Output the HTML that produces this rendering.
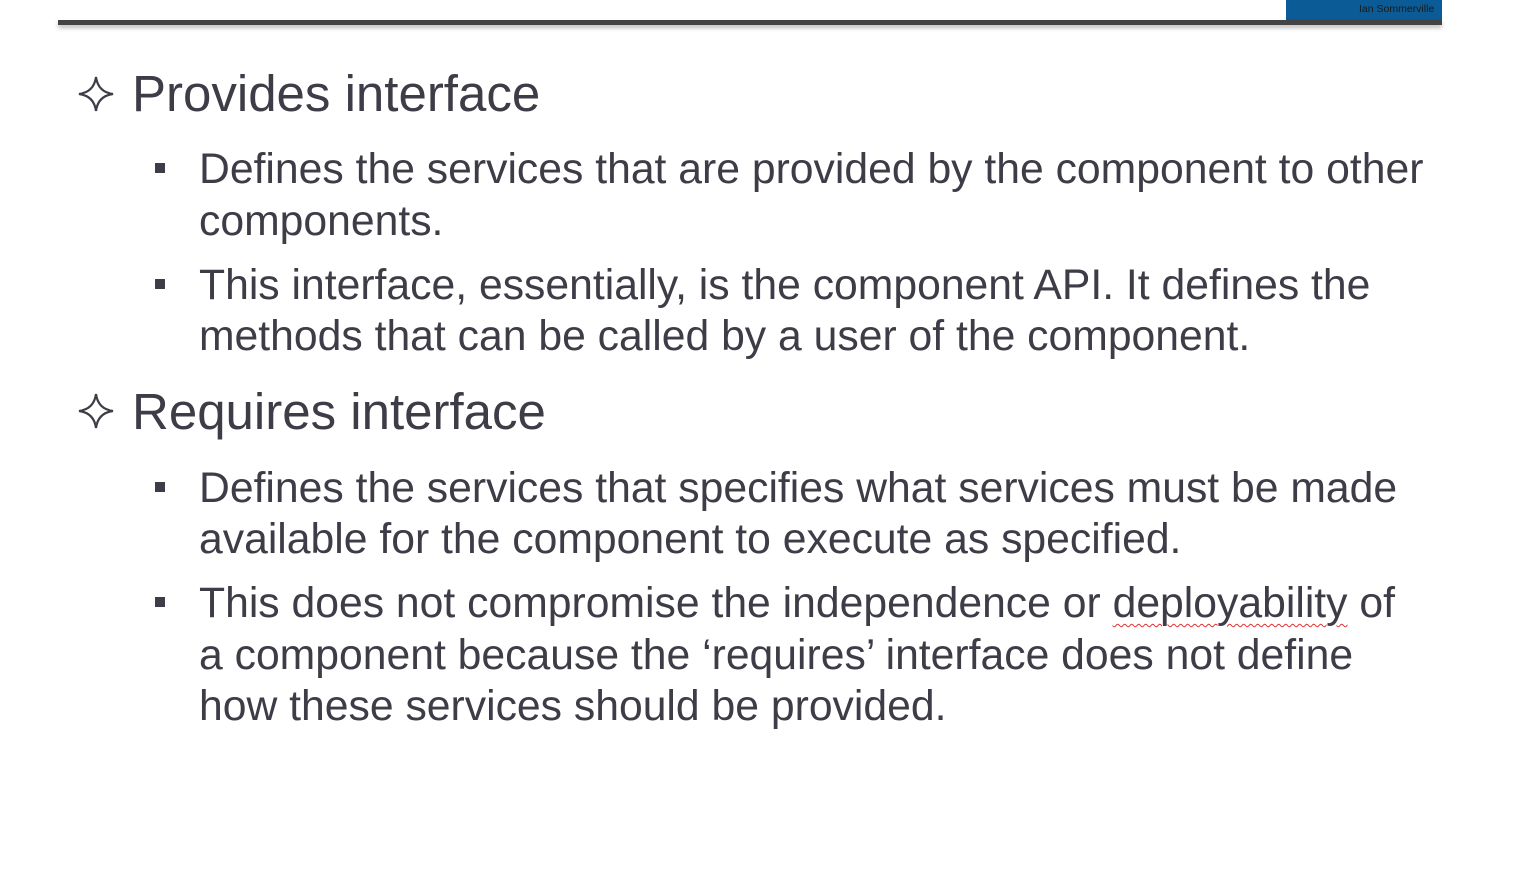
<!DOCTYPE html>
<html><head><meta charset="utf-8"><style>
body{margin:0;width:1515px;height:872px;background:#fff;position:relative;overflow:hidden;font-family:"Liberation Sans",Arial,sans-serif;color:#3d3c47}
.l{position:absolute;white-space:nowrap;line-height:1}
.h{font-size:51px;left:132px}
.b{font-size:42.7px;left:199px}
.sq{position:absolute;left:155px;width:10px;height:10px;background:#3d3c47}
.st{position:absolute;left:77px}
.sq2{text-decoration:underline wavy #e03030;text-decoration-thickness:1px;text-underline-offset:6px}
</style></head><body>
<div style="position:absolute;left:1286px;top:0;width:156px;height:21px;background:#0a5b96"></div>
<div style="position:absolute;left:1359px;top:4px;font-size:10.5px;color:#1a1a1a;line-height:1;font-family:'Liberation Sans Narrow','Liberation Sans',sans-serif">Ian Sommerville</div>
<div style="position:absolute;left:58px;top:20px;width:1384px;height:5px;background:#444;box-shadow:0 3px 4px rgba(0,0,0,0.25)"></div>

<svg class="st" style="top:76px" width="38" height="36" viewBox="0 0 38 36"><path d="M19 1 Q21 16 36 18 Q21 20 19 35 Q17 20 2 18 Q17 16 19 1Z" fill="none" stroke="#3d3c47" stroke-width="2.2"/></svg>
<div class="l h" style="top:68px">Provides interface</div>
<div class="sq" style="top:163px"></div>
<div class="l b" style="top:148px">Defines the services that are provided by the component to other</div>
<div class="l b" style="top:200px">components.</div>
<div class="sq" style="top:279px"></div>
<div class="l b" style="top:264px">This interface, essentially, is the component API. It defines the</div>
<div class="l b" style="top:315px">methods that can be called by a user of the component.</div>

<svg class="st" style="top:393px" width="38" height="36" viewBox="0 0 38 36"><path d="M19 1 Q21 16 36 18 Q21 20 19 35 Q17 20 2 18 Q17 16 19 1Z" fill="none" stroke="#3d3c47" stroke-width="2.2"/></svg>
<div class="l h" style="top:386px">Requires interface</div>
<div class="sq" style="top:482px"></div>
<div class="l b" style="top:467px">Defines the services that specifies what services must be made</div>
<div class="l b" style="top:518px">available for the component to execute as specified.</div>
<div class="sq" style="top:597px"></div>
<div class="l b" style="top:582px">This does not compromise the independence or <span class="sq2">deployability</span> of</div>
<div class="l b" style="top:634px">a component because the ‘requires’ interface does not define</div>
<div class="l b" style="top:685px">how these services should be provided.</div>
</body></html>
